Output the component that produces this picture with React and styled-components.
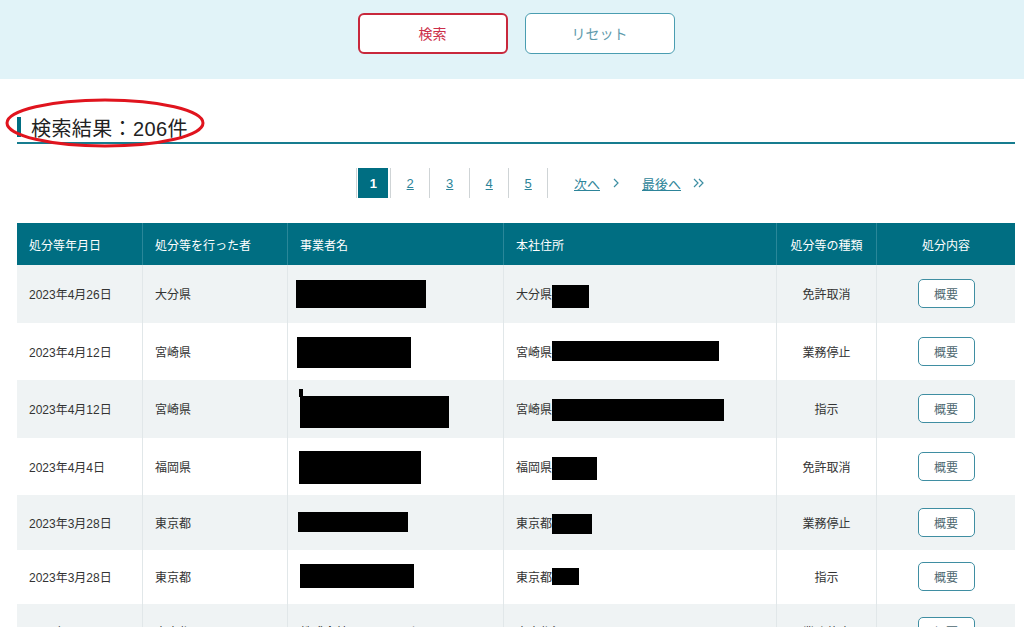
import React from "react";
import styled, { createGlobalStyle } from "styled-components";

const GlobalStyle = createGlobalStyle`
  html, body {
    margin: 0;
    padding: 0;
    overflow: hidden;
    background: #fff;
    font-family: "Liberation Sans", "Noto Sans CJK JP", sans-serif;
    color: #333;
  }
`;

const TEAL = "#006e82";

const rows = [
  {
    date: "2023年4月26日",
    who: "大分県",
    pref: "大分県",
    kind: "免許取消",
    tall: true,
    name: { w: 130, h: 28, x: -4, dy: 0 },
    addr: { w: 37, h: 23, dy: 3 },
  },
  {
    date: "2023年4月12日",
    who: "宮崎県",
    pref: "宮崎県",
    kind: "業務停止",
    tall: true,
    name: { w: 114, h: 31, x: -3, dy: 1 },
    addr: { w: 167, h: 20, dy: 0 },
  },
  {
    date: "2023年4月12日",
    who: "宮崎県",
    pref: "宮崎県",
    kind: "指示",
    tall: true,
    name: { w: 149, h: 32, x: 0, dy: 3, mark: true },
    addr: { w: 172, h: 22, dy: 1 },
  },
  {
    date: "2023年4月4日",
    who: "福岡県",
    pref: "福岡県",
    kind: "免許取消",
    tall: true,
    name: { w: 122, h: 33, x: -1, dy: 1 },
    addr: { w: 45, h: 23, dy: 2 },
  },
  {
    date: "2023年3月28日",
    who: "東京都",
    pref: "東京都",
    kind: "業務停止",
    tall: false,
    name: { w: 110, h: 20, x: -2, dy: 0 },
    addr: { w: 40, h: 20, dy: 2 },
  },
  {
    date: "2023年3月28日",
    who: "東京都",
    pref: "東京都",
    kind: "指示",
    tall: false,
    name: { w: 114, h: 24, x: 0, dy: -1 },
    addr: { w: 27, h: 17, dy: 0 },
  },
  {
    date: "2023年3月24日",
    who: "東京都",
    plainName: "株式会社ーーーシーク・リート",
    pref: "東京都江戸川区",
    kind: "業務停止",
    tall: false,
  },
];

function Chevron({ double }) {
  return (
    <svg width={double ? 14 : 10} height="14" viewBox={double ? "0 0 14 14" : "0 0 10 14"}>
      {double ? (
        <g fill="none" stroke="#3d8ea2" strokeWidth="1.2">
          <path d="M2 3 L6 7 L2 11" />
          <path d="M7 3 L11 7 L7 11" />
        </g>
      ) : (
        <path d="M3 3 L7 7 L3 11" fill="none" stroke="#3d8ea2" strokeWidth="1.2" />
      )}
    </svg>
  );
}

export default function App() {
  return (
    <>
      <GlobalStyle />
      <SearchBand>
        <Inner>
          <ButtonRow>
            <BandButton variant="search">検索</BandButton>
            <BandButton variant="reset">リセット</BandButton>
          </ButtonRow>
        </Inner>
      </SearchBand>
      <Inner>
        <ResultHeading>
          <Bar />
          <HeadingText>検索結果：206件</HeadingText>
          <Annotation width="204" height="52" viewBox="0 0 204 52">
            <ellipse cx="102" cy="26" rx="98" ry="23" fill="none" stroke="#e0141e" strokeWidth="3" />
          </Annotation>
        </ResultHeading>

        <Pager>
          <PageItem first>
            <ActivePage>1</ActivePage>
          </PageItem>
          {[2, 3, 4, 5].map((n) => (
            <PageItem key={n} last={n === 5}>
              <PageLink>{n}</PageLink>
            </PageItem>
          ))}
          <NavLink style={{ marginLeft: 26 }}>
            <PageLink>次へ</PageLink>
            <Chevron />
          </NavLink>
          <NavLink style={{ marginLeft: 21 }}>
            <PageLink>最後へ</PageLink>
            <Chevron double />
          </NavLink>
        </Pager>

        <Table>
          <HeadRow>
            <HeadCell>処分等年月日</HeadCell>
            <HeadCell>処分等を行った者</HeadCell>
            <HeadCell>事業者名</HeadCell>
            <HeadCell>本社住所</HeadCell>
            <HeadCell center>処分等の種類</HeadCell>
            <HeadCell center>処分内容</HeadCell>
          </HeadRow>
          {rows.map((r, i) => (
            <BodyRow key={i} striped={i % 2 === 0} tall={r.tall}>
              <Cell>{r.date}</Cell>
              <Cell>{r.who}</Cell>
              <Cell>
                {r.name ? (
                  <Redact
                    w={r.name.w}
                    h={r.name.h}
                    dy={r.name.dy}
                    style={{ marginLeft: r.name.x }}
                  >
                    {r.name.mark && <Mark />}
                  </Redact>
                ) : (
                  r.plainName
                )}
              </Cell>
              <Cell>
                {r.pref}
                {r.addr && <Redact w={r.addr.w} h={r.addr.h} dy={r.addr.dy} />}
              </Cell>
              <Cell center>{r.kind}</Cell>
              <Cell center>
                <SummaryButton>概要</SummaryButton>
              </Cell>
            </BodyRow>
          ))}
        </Table>
      </Inner>
    </>
  );
}

const SearchBand = styled.div`
  background: #e1f3f8;
  height: 79px;
`;

const Inner = styled.div`
  width: 998px;
  margin-left: 17px;
`;

const ButtonRow = styled.div`
  display: flex;
  justify-content: center;
  gap: 17px;
  padding-top: 13px;
`;

const BandButton = styled.button`
  width: 150px;
  height: 41px;
  box-sizing: border-box;
  background: #fff;
  border-radius: 6px;
  font-family: "Liberation Sans", "Noto Sans CJK JP", sans-serif;
  font-size: 14px;
  padding-bottom: 2px;
  cursor: pointer;
  border: ${(p) => (p.variant === "search" ? "2px solid #c8283c" : "1.5px solid #4a9db1")};
  color: ${(p) => (p.variant === "search" ? "#cc2f4a" : "#5e9aab")};
`;

const ResultHeading = styled.div`
  position: relative;
  display: flex;
  align-items: center;
  gap: 10px;
  margin-top: 33px;
  height: 30px;
  border-bottom: 2px solid #167c8f;
`;

const Bar = styled.span`
  width: 4px;
  height: 20px;
  background: ${TEAL};
  margin-top: -1px;
`;

const HeadingText = styled.h2`
  margin: 0;
  font-size: 20px;
  font-weight: normal;
  color: #222;
  letter-spacing: 0.4px;
`;

const Annotation = styled.svg`
  position: absolute;
  left: -14px;
  top: -15px;
  pointer-events: none;
`;

const Pager = styled.div`
  display: flex;
  justify-content: center;
  align-items: center;
  margin-top: 24px;
  padding-left: 30px;
  height: 30px;
`;

const PageItem = styled.div`
  display: flex;
  align-items: center;
  justify-content: center;
  height: 30px;
  width: ${(p) => (p.first ? "34px" : "39.5px")};
  border-left: 1px solid #cfd4d6;
  border-right: ${(p) => (p.last ? "1px solid #cfd4d6" : "none")};
  box-sizing: border-box;
`;

const ActivePage = styled.span`
  display: flex;
  align-items: center;
  justify-content: center;
  width: 30px;
  height: 30px;
  background: ${TEAL};
  color: #fff;
  font-size: 13px;
  font-weight: bold;
`;

const PageLink = styled.a`
  color: #2d8499;
  font-size: 13px;
  text-decoration: underline;
  cursor: pointer;
`;

const NavLink = styled.div`
  display: flex;
  align-items: center;
  gap: 11px;
`;

const Table = styled.div`
  margin-top: 25px;
  display: grid;
  grid-template-columns: 125px 145px 216px 273px 100px 139px;
`;

const HeadRow = styled.div`
  display: contents;
`;

const HeadCell = styled.div`
  height: 42px;
  background: ${TEAL};
  color: #fff;
  font-size: 12px;
  display: flex;
  align-items: center;
  justify-content: ${(p) => (p.center ? "center" : "flex-start")};
  padding-left: ${(p) => (p.center ? "0" : "12px")};
  border-left: 1px solid #2a8799;
  &:first-child {
    border-left: none;
  }
`;

const BodyRow = styled.div`
  display: contents;
  & > div {
    background: ${(p) => (p.striped ? "#eff3f4" : "#fff")};
    height: ${(p) => (p.tall ? "57.5px" : "54.5px")};
  }
`;

const Cell = styled.div`
  display: flex;
  align-items: center;
  justify-content: ${(p) => (p.center ? "center" : "flex-start")};
  padding-left: ${(p) => (p.center ? "0" : "12px")};
  font-size: 12px;
  color: #333;
  border-left: 1px solid #e1e7e9;
  white-space: nowrap;
  overflow: hidden;
  &:nth-child(6n + 1) {
    border-left: none;
  }
`;

const Redact = styled.span`
  position: relative;
  display: inline-block;
  flex-shrink: 0;
  width: ${(p) => p.w}px;
  height: ${(p) => p.h}px;
  background: #000;
  transform: translateY(${(p) => p.dy || 0}px);
`;

const Mark = styled.span`
  position: absolute;
  left: -1px;
  top: -7px;
  width: 4px;
  height: 8px;
  background: #000;
`;

const SummaryButton = styled.button`
  width: 57px;
  height: 29px;
  box-sizing: border-box;
  background: #fff;
  border: 1px solid #3f8ea2;
  border-radius: 5px;
  color: #4d6770;
  font-family: "Liberation Sans", "Noto Sans CJK JP", sans-serif;
  font-size: 12px;
  cursor: pointer;
`;
